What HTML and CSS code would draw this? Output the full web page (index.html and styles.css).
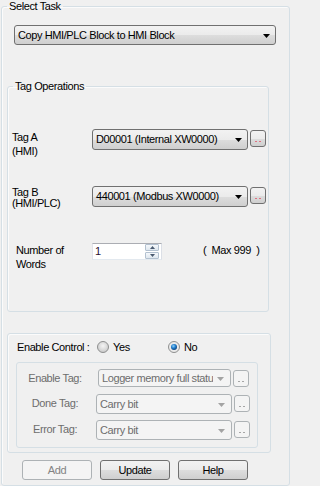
FILE: index.html
```html
<!DOCTYPE html>
<html>
<head>
<meta charset="utf-8">
<link rel="stylesheet" href="styles.css">
</head>
<body>
<fieldset class="group task">
  <legend class="legend">Select Task</legend>
  <div class="combo combo-task">
    <span class="combo-text">Copy HMI/PLC Block to HMI Block</span>
    <svg class="arrow" width="7" height="4" viewBox="0 0 7 4"><polygon points="0,0 7,0 3.5,4" fill="#000"/></svg>
  </div>

  <fieldset class="group tagops">
    <legend class="legend">Tag Operations</legend>
    <div class="tagrow tagrow-a">
      <div class="taglbl taglbl-a">Tag A<br>(HMI)</div>
      <div class="combo combo-tag">
        <span class="combo-text">D00001 (Internal XW0000)</span>
        <svg class="arrow" width="7" height="4" viewBox="0 0 7 4"><polygon points="0,0 7,0 3.5,4" fill="#000"/></svg>
      </div>
      <div class="dots"><span class="dot"></span><span class="dot"></span></div>
    </div>
    <div class="tagrow tagrow-b">
      <div class="taglbl taglbl-b">Tag B<br>(HMI/PLC)</div>
      <div class="combo combo-tag">
        <span class="combo-text">440001 (Modbus XW0000)</span>
        <svg class="arrow" width="7" height="4" viewBox="0 0 7 4"><polygon points="0,0 7,0 3.5,4" fill="#000"/></svg>
      </div>
      <div class="dots"><span class="dot"></span><span class="dot"></span></div>
    </div>
    <div class="wordsrow">
      <div class="taglbl taglbl-w">Number of<br>Words</div>
      <div class="spin">
        <span class="spin-val">1</span>
        <div class="spin-btns">
          <div class="spin-btn"><svg width="5" height="3" viewBox="0 0 5 3"><polygon points="2.5,0 5,3 0,3" fill="#4a5a70"/></svg></div>
          <div class="spin-btn"><svg width="5" height="3" viewBox="0 0 5 3"><polygon points="0,0 5,0 2.5,3" fill="#4a5a70"/></svg></div>
        </div>
      </div>
      <div class="max">( &nbsp;Max 999 &nbsp;)</div>
    </div>
  </fieldset>

  <div class="group control">
    <div class="enable-row">
      <span class="enable-lbl">Enable Control :</span>
      <label class="radio radio-yes">
        <svg width="12" height="12" viewBox="0 0 12 12">
          <defs><radialGradient id="rg1" cx="0.5" cy="0.4" r="0.6"><stop offset="0" stop-color="#f4f4f4"/><stop offset="1" stop-color="#c9c9c9"/></radialGradient></defs>
          <circle cx="6" cy="6" r="5.5" fill="url(#rg1)" stroke="#8e8f8f"/>
        </svg>
        <span>Yes</span>
      </label>
      <label class="radio radio-no">
        <svg width="12" height="12" viewBox="0 0 12 12">
          <defs><radialGradient id="rg2" cx="0.4" cy="0.35" r="0.7"><stop offset="0" stop-color="#8fd0f7"/><stop offset="0.5" stop-color="#1e7ccc"/><stop offset="1" stop-color="#0b3b72"/></radialGradient></defs>
          <circle cx="6" cy="6" r="5.5" fill="#eaeaea" stroke="#8e8f8f"/>
          <circle cx="6" cy="6" r="3" fill="url(#rg2)"/>
        </svg>
        <span>No</span>
      </label>
    </div>
    <div class="tagbox">
      <div class="ctlrow">
        <div class="ctllbl">Enable Tag:</div>
        <div class="combo combo-dis combo-enable">
          <span class="combo-text">Logger memory full status</span>
          <svg class="arrow" width="7" height="4" viewBox="0 0 7 4"><polygon points="0,0 7,0 3.5,4" fill="#a3a3a3"/></svg>
        </div>
        <div class="dots dots-dis"><span class="dot"></span><span class="dot"></span></div>
      </div>
      <div class="ctlrow">
        <div class="ctllbl">Done Tag:</div>
        <div class="combo combo-dis combo-done">
          <span class="combo-text">Carry bit</span>
          <svg class="arrow" width="7" height="4" viewBox="0 0 7 4"><polygon points="0,0 7,0 3.5,4" fill="#a3a3a3"/></svg>
        </div>
        <div class="dots dots-dis"><span class="dot"></span><span class="dot"></span></div>
      </div>
      <div class="ctlrow">
        <div class="ctllbl">Error Tag:</div>
        <div class="combo combo-dis combo-done">
          <span class="combo-text">Carry bit</span>
          <svg class="arrow" width="7" height="4" viewBox="0 0 7 4"><polygon points="0,0 7,0 3.5,4" fill="#a3a3a3"/></svg>
        </div>
        <div class="dots dots-dis"><span class="dot"></span><span class="dot"></span></div>
      </div>
    </div>
  </div>

  <div class="buttons">
    <div class="btn btn-dis">Add</div>
    <div class="btn">Update</div>
    <div class="btn">Help</div>
  </div>
</fieldset>
</body>
</html>
```
FILE: styles.css
```css
html, body {
  margin: 0;
  padding: 0;
  background: #f0f0f0;
}
body {
  font-family: "Liberation Sans", Arial, sans-serif;
  font-size: 11px;
  letter-spacing: -0.4px;
  color: #000;
  width: 291px;
  height: 486px;
  overflow: hidden;
}
.group {
  border: 1px solid #d5dfe5;
  border-radius: 3px;
  box-shadow: inset 1px 1px 0 #fbfbfb;
  min-width: 0;
  box-sizing: border-box;
}
.legend {
  font-size: 11px;
  line-height: 13px;
  padding: 0 2px;
  margin-left: 5px;
}
.task {
  margin: 0 1px;
  padding: 0 0 6px 0;
  width: 289px;
  height: 486px;
}
.combo {
  display: flex;
  align-items: center;
  box-sizing: border-box;
  border: 1px solid #707070;
  border-radius: 3px;
  background: linear-gradient(#f2f2f2 0%, #ebebeb 50%, #dddddd 51%, #cfcfcf 100%);
  overflow: hidden;
}
.combo-text {
  flex: 1;
  white-space: nowrap;
  overflow: hidden;
  padding-left: 3px;
  line-height: 13px;
}
.arrow {
  flex: none;
  margin: 1px 5px 0 4px;
}
.combo-task {
  margin: 12px 0 0 12px;
  width: 262px;
  height: 20px;
}
.tagops {
  margin: 35px 0 0 5px;
  width: 262px;
  padding: 0 0 51px 4px;
}
.tagops .legend {
  margin-left: 1px;
}
.tagrow {
  display: flex;
  align-items: flex-start;
  height: 21px;
}
.tagrow-a {
  margin-top: 36px;
}
.tagrow-b {
  margin-top: 36px;
}
.taglbl {
  width: 80px;
  flex: none;
}
.taglbl-a {
  line-height: 14px;
  padding-top: 1px;
}
.taglbl-b {
  line-height: 11px;
  padding-top: 1px;
}
.combo-tag {
  width: 156px;
  height: 21px;
}
.dots {
  flex: none;
  box-sizing: border-box;
  width: 16px;
  height: 17px;
  margin: 1px 0 0 2px;
  border: 1px solid #707070;
  border-radius: 3px;
  background: linear-gradient(#f2f2f2 0%, #ebebeb 50%, #dddddd 51%, #cfcfcf 100%);
  display: flex;
  justify-content: center;
  align-items: flex-end;
  gap: 2px;
  padding-bottom: 4px;
}
.dot {
  width: 2px;
  height: 1px;
  background: #e07080;
}
.dots-dis {
  border-color: #adb2b5;
  background: #f4f4f4;
}
.dots-dis .dot {
  background: #a6a6a6;
}
.wordsrow {
  display: flex;
  align-items: flex-start;
  height: 17px;
  margin-top: 36px;
}
.taglbl-w {
  line-height: 14px;
  padding-left: 4px;
  width: 76px;
}
.spin {
  box-sizing: border-box;
  width: 70px;
  height: 17px;
  background: #fff;
  border: 1px solid #abadb3;
  border-right-color: #dbdfe6;
  border-bottom-color: #e3e9ef;
  border-left-color: #e2e3ea;
  display: flex;
  align-items: center;
  padding: 0 2px 0 2px;
}
.spin-val {
  flex: 1;
  color: #2a1030;
  line-height: 13px;
}
.spin-btns {
  display: flex;
  flex-direction: column;
  gap: 1px;
}
.spin-btn {
  width: 12px;
  height: 5px;
  border: 1px solid #b3c1d0;
  border-radius: 1px;
  background: linear-gradient(#f5f8fb, #dfe7ef);
  display: flex;
  align-items: center;
  justify-content: center;
  box-sizing: content-box;
}
.spin-btn svg {
  display: block;
}
.max {
  margin: 1px 0 0 41px;
  white-space: nowrap;
  line-height: 13px;
}
.control {
  margin: 21px 0 0 5px;
  width: 264px;
  padding: 5px 0 4px 8px;
}
.enable-row {
  display: flex;
  align-items: center;
  height: 16px;
}
.enable-lbl {
  width: 80px;
  padding-left: 1px;
  flex: none;
}
.radio {
  display: flex;
  align-items: center;
  gap: 4px;
}
.radio svg {
  display: block;
}
.radio-yes {
  width: 71px;
}
.tagbox {
  margin-top: 7px;
  width: 242px;
  box-sizing: border-box;
  border: 1px solid #d5dfe5;
  border-radius: 3px;
  padding: 6px 0 7px 0;
  display: flex;
  flex-direction: column;
  gap: 6px;
}
.ctlrow {
  display: flex;
  align-items: flex-start;
}
.ctllbl {
  width: 76px;
  padding-right: 3px;
  flex: none;
  text-align: center;
  color: #6d6d6d;
  line-height: 19px;
}
.combo-dis {
  border-color: #adb2b5;
  background: #f4f4f4;
  color: #6d6d6d;
  height: 20px;
}
.combo-dis .arrow {
  margin-right: 6px;
}
.combo-enable {
  margin-left: 2px;
  width: 133px;
  height: 18px;
}
.combo-done {
  width: 136px;
}
.buttons {
  display: flex;
  gap: 8px;
  margin: 7px 0 0 20px;
}
.btn {
  box-sizing: border-box;
  width: 70px;
  height: 20px;
  border: 1px solid #707070;
  border-radius: 3px;
  background: linear-gradient(#f2f2f2 0%, #ebebeb 50%, #dddddd 51%, #cfcfcf 100%);
  display: flex;
  align-items: center;
  justify-content: center;
  line-height: 13px;
}
.btn-dis {
  border-color: #adb2b5;
  background: #f4f4f4;
  color: #838383;
}
```
